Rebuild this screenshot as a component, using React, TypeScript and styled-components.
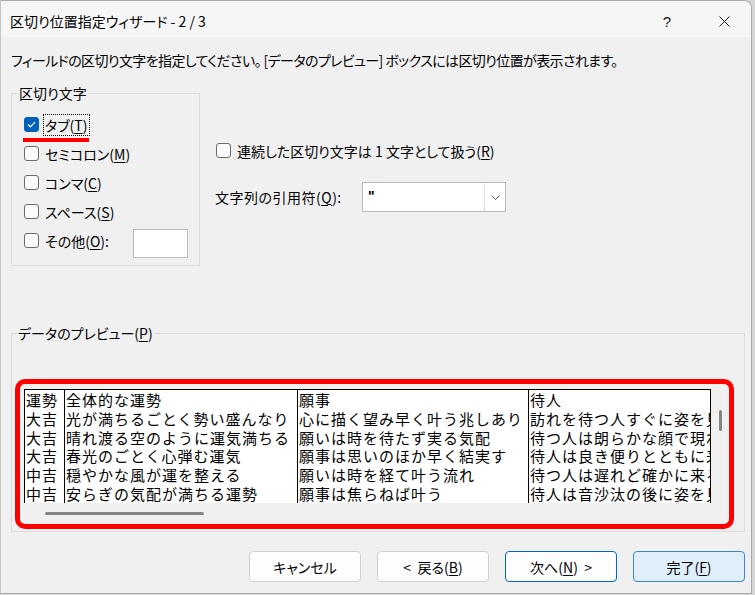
import React from "react";
import styled, { createGlobalStyle } from "styled-components";

const ui = `"Noto Sans CJK JP", "Noto Sans", sans-serif`;

const Global = createGlobalStyle`
  html, body { margin: 0; padding: 0; background: #d6d6d6; }
  body { width: 755px; height: 595px; overflow: hidden; font-family: ${ui}; color: #000; }
  * { box-sizing: border-box; }
`;

const Window = styled.div`
  width: 752px;
  height: 594px;
  background: #f0f0f0;
  border: 1px solid #a9a9a9;
  border-left-color: #c4c4c4;
  border-top-right-radius: 8px;
  display: flex;
  flex-direction: column;
  overflow: hidden;
  font-feature-settings: "palt";
`;

const TitleBar = styled.div`
  height: 36px;
  flex-shrink: 0;
  display: flex;
  align-items: center;
  padding: 4px 4px 0 9px;
  background: #f6f6f6;
`;

const TitleText = styled.div`
  flex: 1;
  font-size: 14px;
  line-height: 20px;
`;

const CaptionGroup = styled.div`
  display: flex;
  gap: 11px;
  height: 100%;
`;

const CaptionButton = styled.div`
  width: 46px;
  display: flex;
  align-items: center;
  justify-content: center;
  font-size: 15px;
  font-family: "Liberation Sans", sans-serif;
  color: #1a1a1a;
`;

const Body = styled.div`
  flex: 1;
  display: flex;
  flex-direction: column;
  padding: 0 6px 0 10px;
`;

const Instruction = styled.div`
  margin-top: 13px;
  font-size: 14px;
  line-height: 20px;
  letter-spacing: -0.6px;
  white-space: nowrap;
`;

const OptionsRow = styled.div`
  margin-top: 14px;
  display: flex;
  align-items: flex-start;
`;

const Group = styled.fieldset<{ $w?: number }>`
  margin: 0;
  border: 1px solid #dcdcdc;
  ${(p) => (p.$w ? `width: ${p.$w}px;` : "")}
`;

const DelimGroup = styled(Group)`
  height: 182px;
  padding: 8px 11px 9px 12px;
`;

const Legend = styled.legend<{ $shift: number }>`
  font-size: 14px;
  line-height: 18px;
  padding: 0 1px;
  margin-left: ${(p) => p.$shift}px;
`;

const CheckRow = styled.div`
  position: relative;
  height: 29px;
  display: flex;
  align-items: center;
`;

const Box = styled.span<{ $checked?: boolean }>`
  width: 15px;
  height: 15px;
  flex-shrink: 0;
  border-radius: 3px;
  border: 1px solid ${(p) => (p.$checked ? "#005fb8" : "#6b6b6b")};
  background: ${(p) => (p.$checked ? "#005fb8" : "#fbfbfb")};
  display: flex;
  align-items: center;
  justify-content: center;
`;

const CheckLabel = styled.span<{ $focus?: boolean }>`
  margin-left: 4px;
  padding: 0 2px 0 1px;
  height: 22px;
  line-height: 20px;
  font-size: 14px;
  border: 1px ${(p) => (p.$focus ? "dotted #000" : "solid transparent")};
  white-space: nowrap;
`;

const Key = styled.span`
  text-decoration: underline;
  text-underline-offset: 2px;
  text-decoration-thickness: 1px;
`;

const RedUnderline = styled.span`
  position: absolute;
  left: -1px;
  top: 28px;
  width: 66px;
  height: 4px;
  background: #ff0000;
`;

const OtherBox = styled.span`
  margin-left: auto;
  align-self: flex-start;
  margin-top: 3px;
  width: 55px;
  height: 29px;
  background: #fff;
  border: 1px solid #bdbdbd;
`;

const RightCol = styled.div`
  margin-left: 16px;
  padding-top: 52px;
  display: flex;
  flex-direction: column;
`;

const FieldRow = styled.div`
  margin-top: 17px;
  display: flex;
  align-items: center;
  height: 30px;
`;

const FieldLabel = styled.span`
  width: 147px;
  margin-left: -1px;
  font-size: 14px;
  line-height: 20px;
  letter-spacing: 0.5px;
  white-space: nowrap;
`;

const Combo = styled.div`
  width: 144px;
  height: 30px;
  background: #fff;
  border: 1px solid #b9b9b9;
  display: flex;
  align-items: stretch;
`;

const ComboValue = styled.span`
  flex: 1;
  padding-left: 5px;
  font-size: 14px;
  font-weight: bold;
  line-height: 26px;
  font-family: "Liberation Sans", sans-serif;
`;

const ComboButton = styled.span`
  width: 21px;
  border-left: 1px solid #dedede;
  display: flex;
  align-items: center;
  justify-content: center;
`;

const PreviewGroup = styled(Group)`
  margin-top: 58px;
  padding: 37px 10px 2px 3px;
`;

const Highlight = styled.div`
  border: 5px solid #ff0000;
  border-radius: 10px;
  padding: 5px 0 0 4px;
  background: #f0f0f0;
`;

const PaneRow = styled.div`
  display: flex;
`;

const Viewport = styled.div`
  width: 687px;
  height: 114px;
  background: #fff;
  border: 1px solid #000;
  border-bottom: none;
  overflow: hidden;
  display: flex;
  font-feature-settings: normal;
`;

const Column = styled.div<{ $w: number; $line: boolean }>`
  flex-shrink: 0;
  width: ${(p) => p.$w}px;
  ${(p) => (p.$line ? "border-left: 1px solid #000;" : "")}
  display: flex;
  flex-direction: column;
`;

const Cell = styled.div`
  height: 19px;
  line-height: 19px;
  padding-left: 1px;
  font-size: 15px;
  letter-spacing: 1px;
  white-space: nowrap;
  overflow: hidden;
  color: #000;
`;

const VScroll = styled.div`
  flex: 1;
  position: relative;
`;

const Thumb = styled.span<{ $v?: boolean }>`
  position: absolute;
  background: #858585;
  border-radius: 2px;
  ${(p) =>
    p.$v
      ? "left: 8px; top: 21px; width: 3px; height: 21px;"
      : "left: 21px; top: 9px; width: 159px; height: 3px;"}
`;

const HScroll = styled.div`
  position: relative;
  height: 21px;
`;

const ButtonRow = styled.div`
  margin-top: 19px;
  display: flex;
  justify-content: flex-end;
  gap: 16px;
`;

const Button = styled.div<{ $kind?: "focus" | "default" }>`
  width: 112px;
  height: 31px;
  border-radius: 4px;
  font-size: 14px;
  display: flex;
  align-items: center;
  justify-content: center;
  white-space: pre;
  border: 1px solid
    ${(p) => (p.$kind === "focus" ? "#0067c0" : p.$kind === "default" ? "#3a86d0" : "#d0d0d0")};
  background: ${(p) => (p.$kind === "default" ? "#e0eef9" : "#fdfdfd")};
`;

const Check = () => (
  <svg width="11" height="11" viewBox="0 0 11 11">
    <path d="M2.3 5.8 L4.4 7.8 L8.7 3.3" fill="none" stroke="#fff" strokeWidth="1.2" strokeLinecap="round" strokeLinejoin="round" />
  </svg>
);

const columns: { w: number; cells: string[] }[] = [
  { w: 39, cells: ["運勢", "大吉", "大吉", "大吉", "中吉", "中吉"] },
  {
    w: 233,
    cells: [
      "全体的な運勢",
      "光が満ちるごとく勢い盛んなり",
      "晴れ渡る空のように運気満ちる",
      "春光のごとく心弾む運気",
      "穏やかな風が運を整える",
      "安らぎの気配が満ちる運勢",
    ],
  },
  {
    w: 231,
    cells: [
      "願事",
      "心に描く望み早く叶う兆しあり",
      "願いは時を待たず実る気配",
      "願事は思いのほか早く結実す",
      "願いは時を経て叶う流れ",
      "願事は焦らねば叶う",
    ],
  },
  {
    w: 260,
    cells: [
      "待人",
      "訪れを待つ人すぐに姿を見せる",
      "待つ人は朗らかな顔で現れる",
      "待人は良き便りとともに来る",
      "待つ人は遅れど確かに来る",
      "待人は音沙汰の後に姿を見せる",
    ],
  },
];

export default function App() {
  return (
    <>
      <Global />
      <Window>
        <TitleBar>
          <TitleText>区切り位置指定ウィザード - 2 / 3</TitleText>
          <CaptionGroup>
            <CaptionButton>?</CaptionButton>
            <CaptionButton>
              <svg width="11" height="11" viewBox="0 0 11 11">
                <path d="M0.5 0.5 L10.5 10.5 M10.5 0.5 L0.5 10.5" stroke="#1a1a1a" strokeWidth="1" />
              </svg>
            </CaptionButton>
          </CaptionGroup>
        </TitleBar>
        <Body>
          <Instruction>
            フィールドの区切り文字を指定してください。 [データのプレビュー] ボックスには区切り位置が表示されます。
          </Instruction>
          <OptionsRow>
            <DelimGroup $w={189}>
              <Legend $shift={-6}>区切り文字</Legend>
              <CheckRow>
                <Box $checked>
                  <Check />
                </Box>
                <CheckLabel $focus>
                  タブ(<Key>T</Key>)
                </CheckLabel>
                <RedUnderline />
              </CheckRow>
              <CheckRow>
                <Box />
                <CheckLabel>
                  セミコロン(<Key>M</Key>)
                </CheckLabel>
              </CheckRow>
              <CheckRow>
                <Box />
                <CheckLabel>
                  コンマ(<Key>C</Key>)
                </CheckLabel>
              </CheckRow>
              <CheckRow>
                <Box />
                <CheckLabel>
                  スペース(<Key>S</Key>)
                </CheckLabel>
              </CheckRow>
              <CheckRow>
                <Box />
                <CheckLabel>
                  その他(<Key>O</Key>):
                </CheckLabel>
                <OtherBox />
              </CheckRow>
            </DelimGroup>
            <RightCol>
              <CheckRow>
                <Box />
                <CheckLabel>
                  連続した区切り文字は&nbsp;1&nbsp;文字として扱う(<Key>R</Key>)
                </CheckLabel>
              </CheckRow>
              <FieldRow>
                <FieldLabel>
                  文字列の引用符(<Key>Q</Key>):
                </FieldLabel>
                <Combo>
                  <ComboValue>"</ComboValue>
                  <ComboButton>
                    <svg width="9" height="5" viewBox="0 0 9 5">
                      <path d="M0.5 0.5 L4.5 4.5 L8.5 0.5" fill="none" stroke="#5a5a5a" strokeWidth="1" />
                    </svg>
                  </ComboButton>
                </Combo>
              </FieldRow>
            </RightCol>
          </OptionsRow>
          <PreviewGroup>
            <Legend $shift={2}>
              データのプレビュー(<Key>P</Key>)
            </Legend>
            <Highlight>
              <PaneRow>
                <Viewport>
                  {columns.map((c, i) => (
                    <Column key={i} $w={c.w} $line={i > 0}>
                      {c.cells.map((t, j) => (
                        <Cell key={j}>{t}</Cell>
                      ))}
                    </Column>
                  ))}
                </Viewport>
                <VScroll>
                  <Thumb $v />
                </VScroll>
              </PaneRow>
              <HScroll>
                <Thumb />
              </HScroll>
            </Highlight>
          </PreviewGroup>
          <ButtonRow>
            <Button>キャンセル</Button>
            <Button>
              {"<  戻る("}<Key>B</Key>)
            </Button>
            <Button $kind="focus">
              次へ(<Key>N</Key>){"  >"}
            </Button>
            <Button $kind="default">
              完了(<Key>F</Key>)
            </Button>
          </ButtonRow>
        </Body>
      </Window>
    </>
  );
}
